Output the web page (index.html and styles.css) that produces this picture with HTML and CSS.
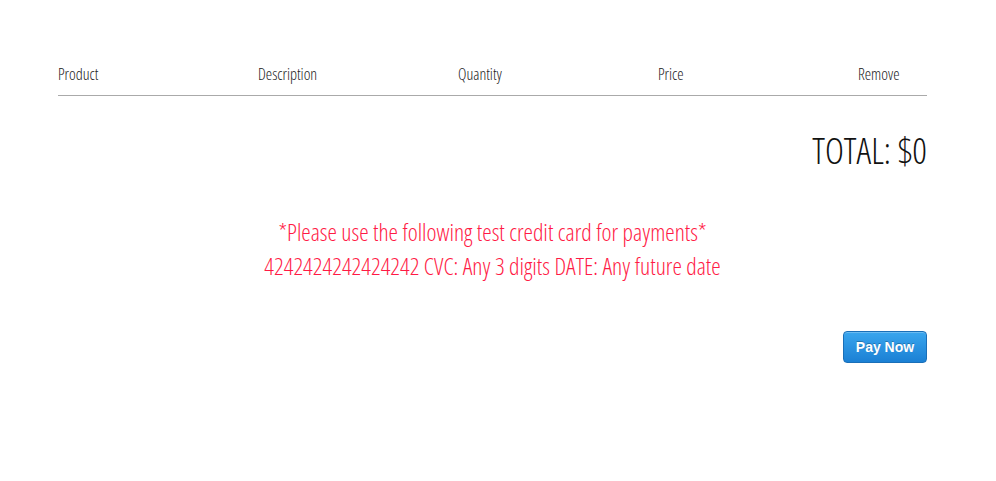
FILE: index.html
```html
<!DOCTYPE html>
<html>
<head>
<meta charset="utf-8">
<link rel="stylesheet" href="styles.css">
</head>
<body>
<div class="cart">
  <div class="head">
    <div>Product</div>
    <div>Description</div>
    <div>Quantity</div>
    <div>Price</div>
    <div>Remove</div>
  </div>
  <div class="total">TOTAL: $0</div>
  <div class="notice">
    <p>*Please use the following test credit card for payments*</p>
    <p>4242424242424242 CVC: Any 3 digits DATE: Any future date</p>
  </div>
  <div class="pay-row">
    <button class="pay">Pay Now</button>
  </div>
</div>
</body>
</html>
```
FILE: styles.css
```css
html, body {
  margin: 0;
  padding: 0;
  background: #fff;
}
body {
  font-family: "Open Sans", sans-serif;
  font-weight: 300;
  font-stretch: 75%;
  color: #111;
}
.cart {
  width: 869px;
  margin: 0 0 0 58px;
  padding-top: 61px;
}
.head {
  display: grid;
  grid-template-columns: 200px 200px 200px 200px 1fr;
  font-size: 16px;
  line-height: 26px;
  color: #222;
  padding-bottom: 8px;
  border-bottom: 1px solid #aaa;
}
.total {
  text-align: right;
  font-size: 36px;
  line-height: 50px;
  margin-top: 30px;
}
.notice {
  text-align: center;
  color: #ff1a45;
  font-size: 23.8px;
  line-height: 34px;
  margin-top: 39px;
}
.notice p {
  margin: 0;
}
.pay-row {
  display: flex;
  justify-content: flex-end;
  margin-top: 48px;
}
.pay {
  width: 84px;
  height: 32px;
  border: 1px solid #1a6fb8;
  border-radius: 4px;
  background: linear-gradient(#3aa6ee, #1b80d4);
  color: #fff;
  font-family: "Liberation Sans", Arial, sans-serif;
  font-weight: bold;
  font-stretch: normal;
  font-size: 14px;
  text-shadow: 0 -1px 0 rgba(0,0,0,0.25);
  box-shadow: inset 0 1px 0 rgba(255,255,255,0.25);
  padding: 0;
}
```
